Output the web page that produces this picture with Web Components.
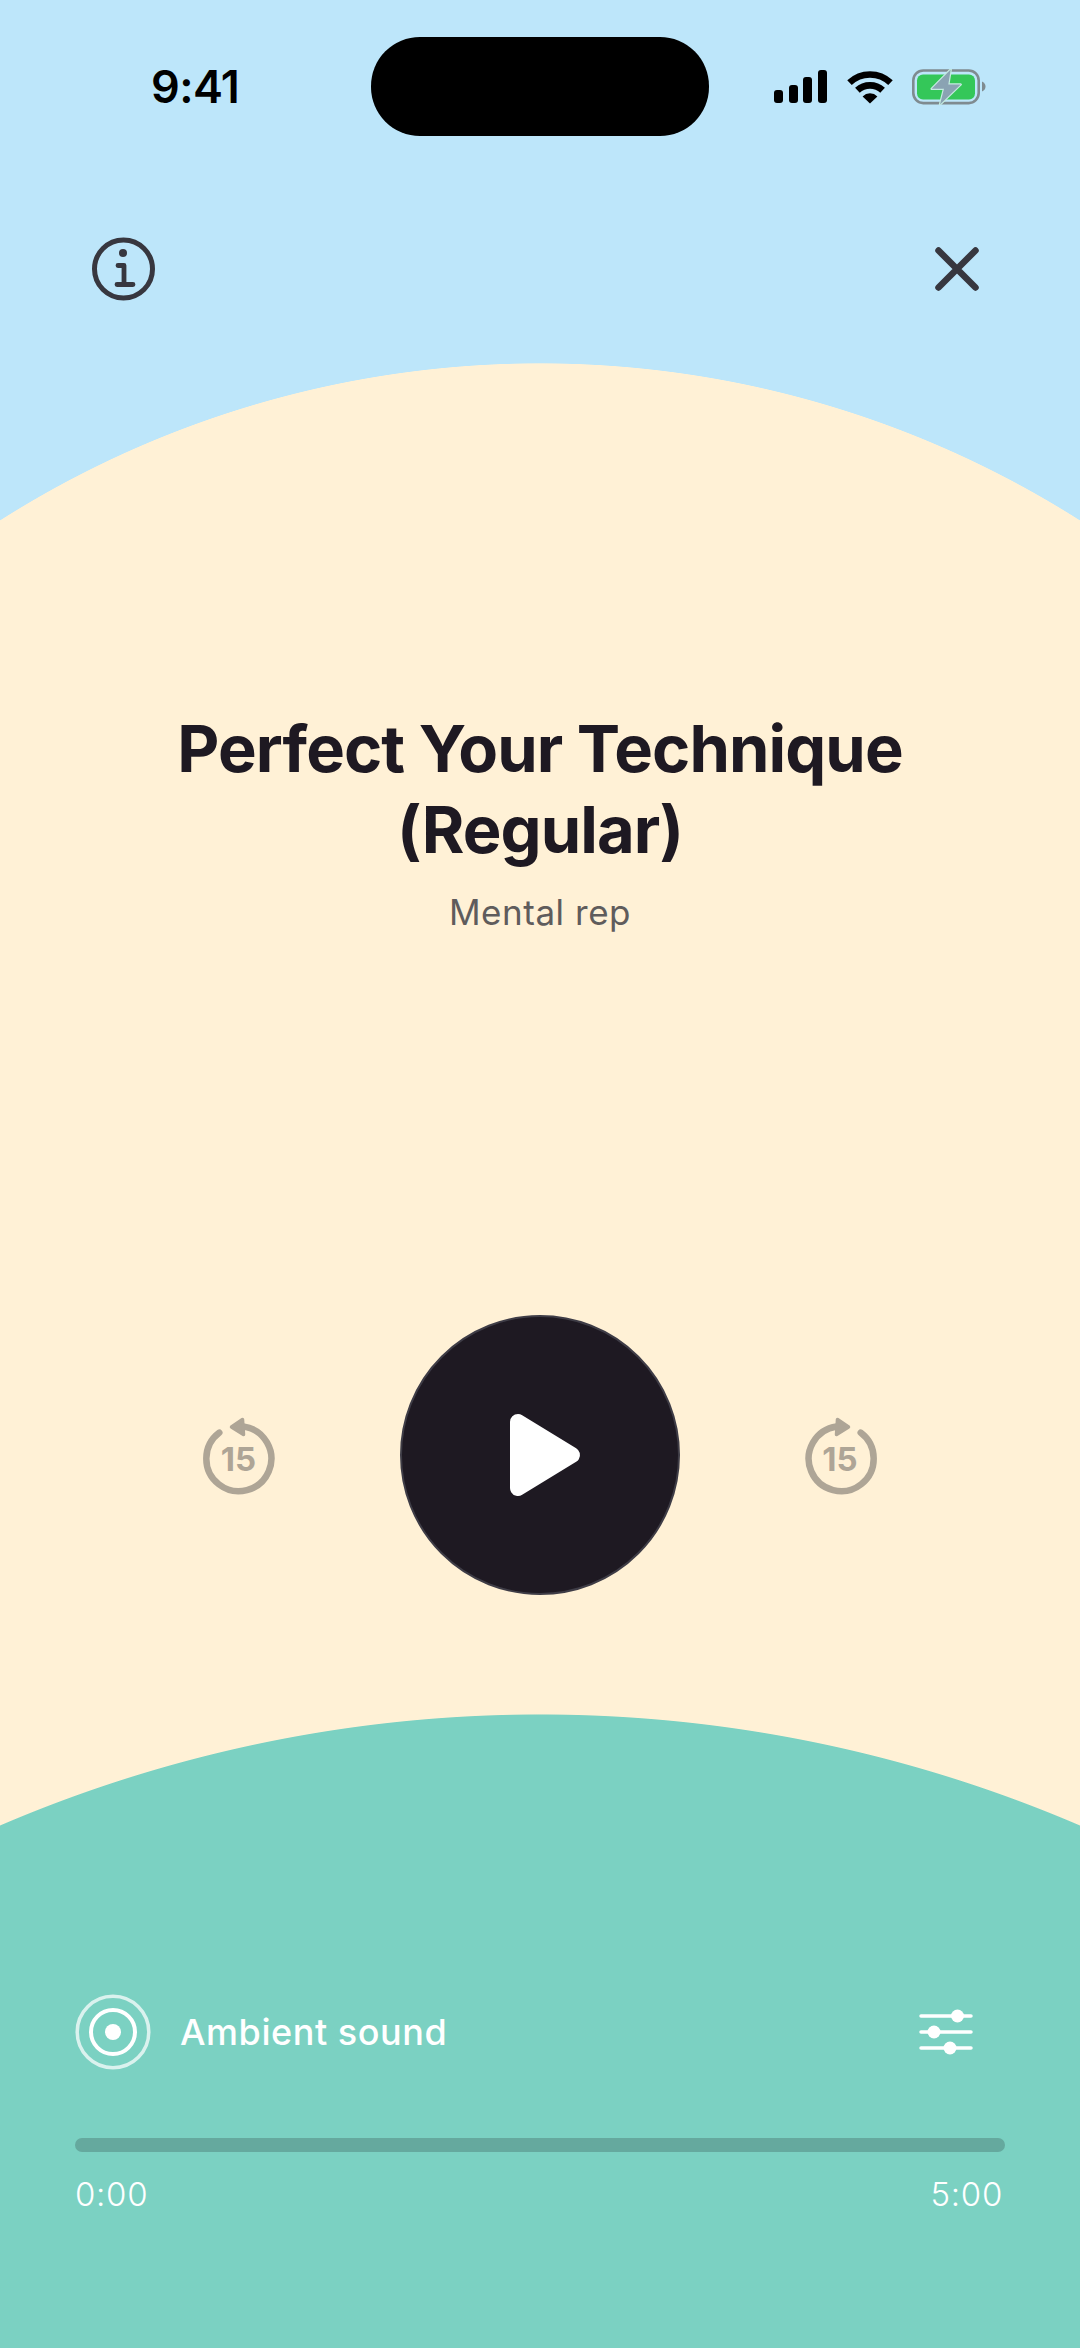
<!DOCTYPE html>
<html lang="en"><head><meta charset="utf-8"><title>Perfect Your Technique</title>
<style>html,body{margin:0;padding:0}body{font-family:Inter,"Noto Sans",sans-serif;background:#7bd1c2}</style>
</head><body>
<player-screen>
  <status-bar></status-bar>
  <top-actions></top-actions>
  <session-title heading="Perfect Your Technique (Regular)" sub="Mental rep"></session-title>
  <player-controls></player-controls>
  <ambient-row label="Ambient sound"></ambient-row>
  <progress-bar start="0:00" end="5:00"></progress-bar>
</player-screen>
<script>
function def(name, html){
  customElements.define(name, class extends HTMLElement{
    constructor(){super();const r=this.attachShadow({mode:'open'});
      r.innerHTML=typeof html==='function'?html(this):html;}
  });
}
def('player-screen',`<style>:host{display:flex;flex-direction:column;width:1080px;height:2348px;overflow:hidden;color:#1e1922;
background:
 radial-gradient(circle 1369px at 540px 3083px,#7bd1c2 99.93%,rgba(123,209,194,0) 100%),
 radial-gradient(circle 1007px at 540px 1370px,#fff1d6 99.93%,rgba(255,241,214,0) 100%),
 #bde6fa;font-family:Inter,"Noto Sans",sans-serif}</style><slot></slot>`);

def('status-bar',`<style>:host{display:grid;grid-template-columns:371px 338px 1fr;height:99px;padding-top:37px;margin-bottom:101px;align-items:start}
.t{font:600 45px/1 Inter,sans-serif;color:#000;padding:27px 0 0 151px;letter-spacing:-.6px}
.i{height:99px;background:#000;border-radius:49px}
.s{display:flex;align-items:flex-start;padding:33px 0 0 65px}
svg{display:block}</style>
<div class="t">9:41</div><div class="i"></div>
<div class="s">
<svg width="53" height="33" viewBox="0 0 53 33" fill="#000"><rect x="0" y="20" width="9" height="13" rx="3"/><rect x="15" y="15" width="9" height="18" rx="3"/><rect x="29" y="7" width="9" height="26" rx="3"/><rect x="44" y="0" width="9" height="33" rx="3"/></svg>
<svg width="46" height="34" viewBox="0 0 46 34" style="margin:0 0 0 20px"><g fill="none" stroke="#000"><path d="M2.500 12.600A29.700 29.700 0 0 1 43.500 12.600" stroke-width="6.500"/><path d="M10.400 20.300A18.500 18.500 0 0 1 35.600 20.300" stroke-width="6.800"/></g><path d="M23 33.500L15.600 26.400A10.500 10.500 0 0 1 30.400 26.400Z" fill="#000"/></svg>
<svg width="74" height="36" viewBox="0 0 74 36" style="margin:-1px 0 0 19px">
<rect x="1.300" y="1.500" width="65.400" height="32.600" rx="10" fill="none" stroke="#7f8b90" stroke-width="2.600"/>
<rect x="5" y="5.500" width="58" height="25" rx="6" fill="#34c759"/>
<path d="M70 12.500C72.500 13.500 73.500 15.500 73.500 17.500S72.500 21.500 70 22.500Z" fill="#7f8b90"/>
<path d="M38.700 .5L19.700 19.800H32L28 35.500L48.700 15.500H36.300Z" fill="#8aa3b3" stroke="#c4ebe0" stroke-width="2.400" stroke-linejoin="round" paint-order="stroke"/>
</svg></div>`);

def('top-actions',`<style>:host{display:flex;justify-content:space-between;align-items:center;height:64px;padding:0 101px 0 92px}svg{display:block}</style>
<svg width="64" height="64" viewBox="0 0 64 64" fill="none" stroke="#37373f" stroke-linecap="round"><circle cx="31.500" cy="32" r="29" stroke-width="5"/><circle cx="31" cy="16" r="4" fill="#37373f" stroke="none"/><path d="M26 28.500H32V47.500M25 47.500H41" stroke-width="4.800" stroke-linejoin="round"/></svg>
<svg width="44" height="44" viewBox="0 0 44 44" fill="none" stroke="#37373f" stroke-width="6.500" stroke-linecap="round"><path d="M3.500 3.500L40.500 40.500M40.500 3.500L3.500 40.500"/></svg>`);

def('session-title',h=>`<style>:host{display:block;margin-top:407px;text-align:center}
h1{margin:0;font:650 65px/81px Inter,sans-serif;color:#1e1922;width:800px;margin-inline:auto;letter-spacing:-.9px}
p{margin:21px 0 0;font:400 35px/42px Inter,sans-serif;color:#5f5c5c;letter-spacing:.55px}</style>
<h1>${h.getAttribute('heading')}</h1><p>${h.getAttribute('sub')}</p>`);

def('skip-button',h=>{const f=h.hasAttribute('forward');return `<style>:host{display:grid;width:80px;height:80px;place-items:center}
svg,span{grid-area:1/1}svg{display:block}
span{font:700 33px/1 Inter,sans-serif;color:#aea596;padding:9px ${f?2:1}px 0 0}</style>
<svg width="80" height="80" viewBox="0 0 80 80"><g ${f?'transform="translate(80 0) scale(-1 1)"':''}><path d="M20.300 17.700A32.500 32.500 0 1 0 44.300 11.500" fill="none" stroke="#aea596" stroke-width="6.500" stroke-linecap="round"/><path d="M32.500 12L43.500 4.500L44.500 19.500Z" fill="#aea596" stroke="#aea596" stroke-width="3.500" stroke-linejoin="round"/></g></svg><span>15</span>`});

def('play-button',`<style>:host{display:flex;align-items:center;justify-content:center;width:280px;height:280px;box-sizing:border-box;border-radius:50%;background:#1e1922;border:2px solid #3e3c46}svg{display:block}</style>
<svg width="100" height="100" viewBox="0 0 100 100"><path d="M28 17L82 50L28 83Z" fill="#fff" stroke="#fff" stroke-width="16" stroke-linejoin="round"/></svg>`);

def('player-controls',`<style>:host{display:flex;justify-content:center;align-items:center;gap:121px;margin-top:382px}</style>
<skip-button></skip-button><play-button></play-button><skip-button forward></skip-button>`);

def('ambient-row',h=>`<style>:host{display:flex;align-items:center;margin-top:399px;padding:0 107px 0 75px;height:76px;color:#fff}
svg{display:block}.l{flex:1;font:500 36px/1 Inter,sans-serif;padding-left:29px;letter-spacing:.55px}</style>
<svg width="76" height="76" viewBox="0 0 76 76" fill="none"><circle cx="38" cy="38" r="35.800" stroke="#fff" stroke-opacity=".72" stroke-width="3.500"/><circle cx="38" cy="38" r="22" stroke="#fff" stroke-width="4"/><circle cx="38" cy="38" r="8" fill="#fff"/></svg>
<span class="l">${h.getAttribute('label')}</span>
<svg width="54" height="46" viewBox="0 0 54 46" fill="none" stroke="#fff" stroke-width="3.500" stroke-linecap="round"><path d="M2 7H52M2 23H52M2 39H52"/><g fill="#fff" stroke="none"><circle cx="38.500" cy="7" r="6.500"/><circle cx="15" cy="23" r="6.500"/><circle cx="31" cy="39" r="6.500"/></g></svg>`);

def('progress-bar',h=>`<style>:host{display:block;margin:68px 75px 0}
.t{height:14px;border-radius:7px;background:#65a99e}
.l{display:flex;justify-content:space-between;margin-top:22px;font:300 33px/40px Inter,sans-serif;color:#fff;padding:0 2px 0 0;letter-spacing:.7px}</style>
<div class="t"></div><div class="l"><span>${h.getAttribute('start')}</span><span>${h.getAttribute('end')}</span></div>`);
</script>
</body></html>
